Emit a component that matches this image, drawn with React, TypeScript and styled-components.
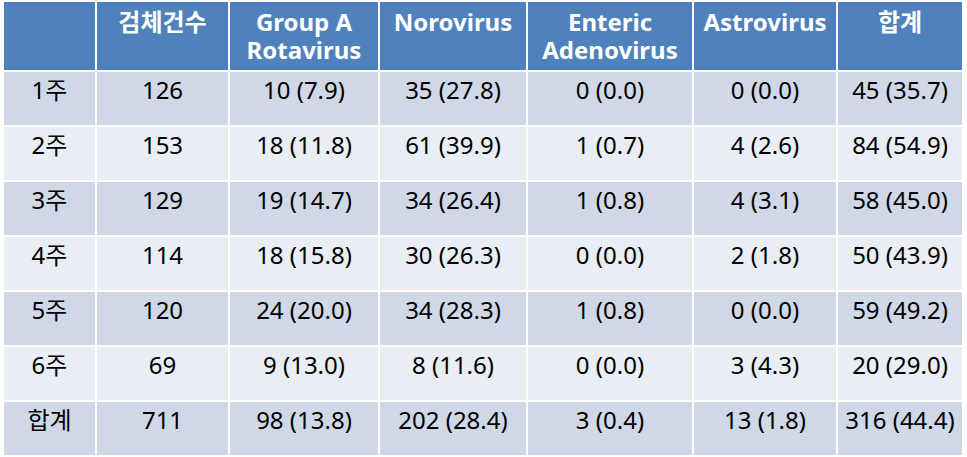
import styled, { createGlobalStyle } from "styled-components";

const GlobalStyle = createGlobalStyle`
  body {
    margin: 0;
    background: #ffffff;
    font-family: "Noto Sans", "Noto Sans CJK KR", sans-serif;
  }
`;

const header = ["", "검체건수", "Group A\nRotavirus", "Norovirus", "Enteric\nAdenovirus", "Astrovirus", "합계"];

const rows: string[][] = [
  ["1주", "126", "10 (7.9)", "35 (27.8)", "0 (0.0)", "0 (0.0)", "45 (35.7)"],
  ["2주", "153", "18 (11.8)", "61 (39.9)", "1 (0.7)", "4 (2.6)", "84 (54.9)"],
  ["3주", "129", "19 (14.7)", "34 (26.4)", "1 (0.8)", "4 (3.1)", "58 (45.0)"],
  ["4주", "114", "18 (15.8)", "30 (26.3)", "0 (0.0)", "2 (1.8)", "50 (43.9)"],
  ["5주", "120", "24 (20.0)", "34 (28.3)", "1 (0.8)", "0 (0.0)", "59 (49.2)"],
  ["6주", "69", "9 (13.0)", "8 (11.6)", "0 (0.0)", "3 (4.3)", "20 (29.0)"],
  ["합계", "711", "98 (13.8)", "202 (28.4)", "3 (0.4)", "13 (1.8)", "316 (44.4)"],
];

const widths = [92, 133, 150, 148, 166, 144, 125];

const Table = styled.table`
  margin: 2px 0 0 4px;
  border-collapse: collapse;
  table-layout: fixed;
  width: 958px;
`;

const HeadCell = styled.th`
  background: #4f81bd;
  color: #ffffff;
  font-weight: 700;
  font-size: 24px;
  line-height: 28px;
  height: 60px;
  padding: 6px 0 2px;
  vertical-align: top;
  text-align: center;
  white-space: pre-line;
  border: 2px solid #ffffff;
  border-top: none;
  &:first-child {
    border-left: none;
  }
  &:last-child {
    border-right: none;
  }
`;

const Row = styled.tr<{ $shade: boolean }>`
  background: ${(p) => (p.$shade ? "#d0d8e8" : "#e9edf4")};
`;

const Cell = styled.td`
  font-size: 24px;
  line-height: 28px;
  height: 49px;
  padding: 4px 0 0;
  vertical-align: top;
  text-align: center;
  color: #000000;
  border: 2px solid #ffffff;
  &:first-child {
    border-left: none;
  }
  &:last-child {
    border-right: none;
  }
`;

export default function App() {
  return (
    <>
      <GlobalStyle />
      <Table>
        <colgroup>
          {widths.map((w, i) => (
            <col key={i} style={{ width: w }} />
          ))}
        </colgroup>
        <thead>
          <tr>
            {header.map((h, i) => (
              <HeadCell key={i}>{h}</HeadCell>
            ))}
          </tr>
        </thead>
        <tbody>
          {rows.map((r, i) => (
            <Row key={i} $shade={i % 2 === 0}>
              {r.map((c, j) => (
                <Cell key={j}>{c}</Cell>
              ))}
            </Row>
          ))}
        </tbody>
      </Table>
    </>
  );
}
